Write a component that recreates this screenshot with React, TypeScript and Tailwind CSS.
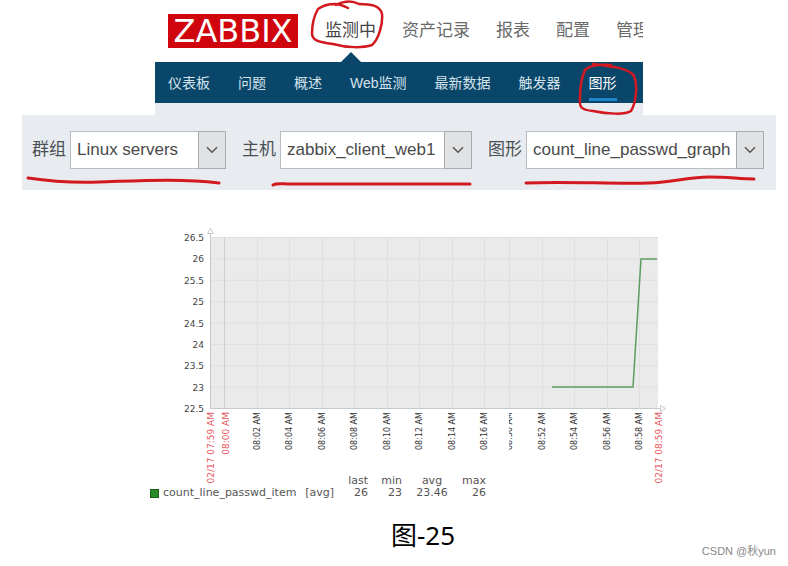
import type { ReactNode } from 'react';

const mainMenu = ['资产记录', '报表', '配置', '管理'];
const subMenu = ['仪表板', '问题', '概述', 'Web监测', '最新数据', '触发器'];

const yTicks = ['26.5', '26', '25.5', '25', '24.5', '24', '23.5', '23', '22.5'];

const xTicks = [
    { x: 128, label: '08:02 AM' },
    { x: 160, label: '08:04 AM' },
    { x: 193, label: '08:06 AM' },
    { x: 225, label: '08:08 AM' },
    { x: 258, label: '08:10 AM' },
    { x: 290, label: '08:12 AM' },
    { x: 323, label: '08:14 AM' },
    { x: 355, label: '08:16 AM' },
    { x: 380, label: '08:50 AM', cut: true },
    { x: 413, label: '08:52 AM' },
    { x: 445, label: '08:54 AM' },
    { x: 478, label: '08:56 AM' },
    { x: 510, label: '08:58 AM' },
];

const redTicks = [
    { x: 81, label: '02/17 07:59 AM' },
    { x: 96, label: '08:00 AM' },
    { x: 529, label: '02/17 08:59 AM' },
];

type FieldProps = {
    id: string;
    label: string;
    value: string;
    width: string;
    children: ReactNode;
};

const Field = ({ id, label, value, width, children }: FieldProps) => (
    <div className="relative flex items-center gap-1">
        <label htmlFor={id} className="text-[17px] leading-6 text-[#4a4f54]">{label}</label>
        <div className={`relative ${width}`}>
            <select
                id={id}
                defaultValue={value}
                className="block h-[38px] w-full appearance-none border border-[#b9bdc1] bg-white pl-[6px] pr-7 text-[17px] text-[#4a4a4a]"
            >
                <option>{value}</option>
            </select>
            <span className="pointer-events-none absolute inset-y-0 right-0 flex w-7 items-center justify-center border border-[#a9adb0] bg-[#e1e2e3]">
                <svg width="12" height="8" viewBox="0 0 12 8" fill="none" stroke="#555" strokeWidth="1.5">
                    <path d="M1 1.2 6 6.2 11 1.2" />
                </svg>
            </span>
        </div>
        {children}
    </div>
);

const Header = () => (
    <header className="mx-auto w-full max-w-[488px] overflow-hidden whitespace-nowrap">
        <div className="flex h-[62px] items-center pl-[13px]">
            <a href="#home" className="flex h-[34px] w-[130px] shrink-0 items-center justify-center bg-[#d0040c] font-['DejaVu_Sans',sans-serif] text-[32px] leading-8 text-white">
                ZABBIX
            </a>
            <nav className="ml-[27px] flex gap-[26px] text-[17px] leading-6 text-[#6a6a6a]">
                <a href="#monitoring" className="relative shrink-0 text-[#444]">
                    监测中
                    {/* Pointer down to the sub menu */}
                    <svg className="absolute left-4 top-8" width="20" height="12" viewBox="0 0 20 12">
                        <path d="M0 11 10 1 20 11v1H0z" fill="#0a466a" />
                    </svg>
                    <svg className="absolute -left-4 -top-5" width="76" height="52" viewBox="0 0 76 52" fill="none" stroke="#d31920" strokeWidth="2.5" strokeLinecap="round">
                        <path d="M39 9C35 7 30 5 26 5 20 5 13 7 9 10 5 17 3 26 3 34 3 41 8 43 24 45 38 49 54 49 63 46 70 40 74 24 73 15 71 6 61 5 50 5 42 1 33 3 27 6" />
                    </svg>
                </a>
                {mainMenu.map((item) => (
                    <a key={item} href="#menu" className="shrink-0">{item}</a>
                ))}
            </nav>
        </div>
        <nav className="flex h-[41px] items-center gap-7 bg-[#0a466a] pl-[13px] text-sm leading-5 text-[#d5e3ec]">
            {subMenu.map((item) => (
                <a key={item} href="#sub" className="shrink-0">{item}</a>
            ))}
            <a href="#graphs" className="relative shrink-0 text-white">
                图形
                <span className="absolute -bottom-2 left-0 h-[3px] w-full bg-[#1f86cc]" />
                <svg className="absolute -left-3 -top-3" width="64" height="56" viewBox="0 0 64 56" fill="none" stroke="#d31920" strokeWidth="2.5" strokeLinecap="round">
                    <path d="M34 4C23 3 13 4 8 9 4 18 3 28 3 37 2 46 4 49 16 50 30 53 48 54 54 50 59 42 61 24 57 15 52 7 33 5 16 3" />
                </svg>
            </a>
        </nav>
        <div className="h-3 bg-[#e8ecf0]" />
    </header>
);

const Graph = () => (
    <figure className="mx-auto w-[540px] max-w-full font-['DejaVu_Sans',sans-serif] text-[#555]">
        <svg className="block overflow-visible" width="540" height="285" viewBox="0 0 540 285">
            <rect x="81" y="47" width="448" height="171" fill="#eaeaea" />
            <g stroke="#dfdfdf" strokeWidth="1">
                {yTicks.map((tick, i) => (
                    <line key={tick} x1="81" x2="529" y1={47.5 + i * 21.375} y2={47.5 + i * 21.375} />
                ))}
                {xTicks.map((tick) => (
                    <line key={tick.label} x1={tick.x + 0.5} x2={tick.x + 0.5} y1="47" y2="218" />
                ))}
                <line x1="95.5" x2="95.5" y1="47" y2="218" stroke="#cfcfcf" />
            </g>
            {/* Axes with arrow heads */}
            <g fill="none" stroke="#c4caca">
                <path d="M81.5 41V218.5H533" />
                <path d="M78.5 43.5 81.5 38.5 84.5 43.5z" fill="#fff" />
                <path d="M531.5 215.5 536.5 218.5 531.5 221.5z" fill="#fff" />
            </g>
            <path d="M423 197H504L512 69H528" fill="none" stroke="#5c9d60" strokeWidth="1.5" />

            <g fontSize="9" fill="#444" textAnchor="end">
                {yTicks.map((tick, i) => (
                    <text key={tick} x="75" y={51 + i * 21.375}>{tick}</text>
                ))}
            </g>
            <clipPath id="half-label">
                <rect x="380" y="218" width="8" height="50" />
            </clipPath>
            {xTicks.map((tick) => (
                <g key={tick.label} clipPath={tick.cut ? 'url(#half-label)' : undefined}>
                    <text transform={`translate(${tick.x + 3} 222) rotate(-90)`} fontSize="8" fill="#333" textAnchor="end">
                        {tick.label}
                    </text>
                </g>
            ))}
            {redTicks.map((tick) => (
                <text key={tick.label} transform={`translate(${tick.x + 4} 222) rotate(-90)`} fontSize="9" fill="#e8545a" textAnchor="end">
                    {tick.label}
                </text>
            ))}
        </svg>
        <table className="ml-[21px] table-fixed text-right text-[11px] leading-3">
            <thead>
                <tr>
                    <th className="w-[148px]" />
                    <th className="w-[36px]" />
                    <th className="w-[34px] font-normal">last</th>
                    <th className="w-[34px] font-normal">min</th>
                    <th className="w-[60px] text-center font-normal">avg</th>
                    <th className="w-[23px] font-normal">max</th>
                </tr>
            </thead>
            <tbody>
                <tr>
                    <td>
                        <span className="flex items-center gap-1 text-left">
                            <span className="size-[9px] border border-[#1c5c1c] bg-[#2a8a2a]" />
                            count_line_passwd_item
                        </span>
                    </td>
                    <td>[avg]</td>
                    <td>26</td>
                    <td>23</td>
                    <td className="text-center">23.46</td>
                    <td>26</td>
                </tr>
            </tbody>
        </table>
    </figure>
);

const App = () => {
    return (
        <main className="min-h-screen bg-white pl-[22px] pr-3 font-['Liberation_Sans','Noto_Sans_CJK_SC',sans-serif]">
            <Header />
            <form className="flex min-h-[75px] items-center gap-4 bg-[#e8ecf0] pb-[5px] pl-[10px]">
                <Field id="group" label="群组" value="Linux servers" width="w-[156px]">
                    <svg className="absolute -left-2 top-11" width="200" height="12" viewBox="0 0 200 12" fill="none" stroke="#d31920" strokeWidth="3" strokeLinecap="round">
                        <path d="M4 3C24 6 45 8 75 7 110 6 155 3 195 8" />
                    </svg>
                </Field>
                <Field id="host" label="主机" value="zabbix_client_web1" width="w-[192px]">
                    <svg className="absolute left-7 top-12" width="204" height="10" viewBox="0 0 204 10" fill="none" stroke="#d31920" strokeWidth="3" strokeLinecap="round">
                        <path d="M3 6C7 4 12 5 18 5H200" />
                    </svg>
                </Field>
                <Field id="graph" label="图形" value="count_line_passwd_graph" width="w-[238px]">
                    <svg className="absolute left-9 top-11" width="234" height="12" viewBox="0 0 234 12" fill="none" stroke="#d31920" strokeWidth="3" strokeLinecap="round">
                        <path d="M2 8C40 6 85 9 125 8 150 7 165 2 185 2 205 2 215 4 230 4" />
                    </svg>
                </Field>
            </form>
            <Graph />
            <div className="grid grid-cols-[1fr_auto_1fr] items-start pl-12 pt-5">
                <p className="col-start-2 font-['Noto_Sans','Noto_Sans_CJK_SC',sans-serif] text-[26px] leading-8 text-black">图-25</p>
                <footer className="mt-6 text-right text-[11px] leading-4 text-[#888]">CSDN @秋yun</footer>
            </div>
        </main>
    );
};

export default App;
